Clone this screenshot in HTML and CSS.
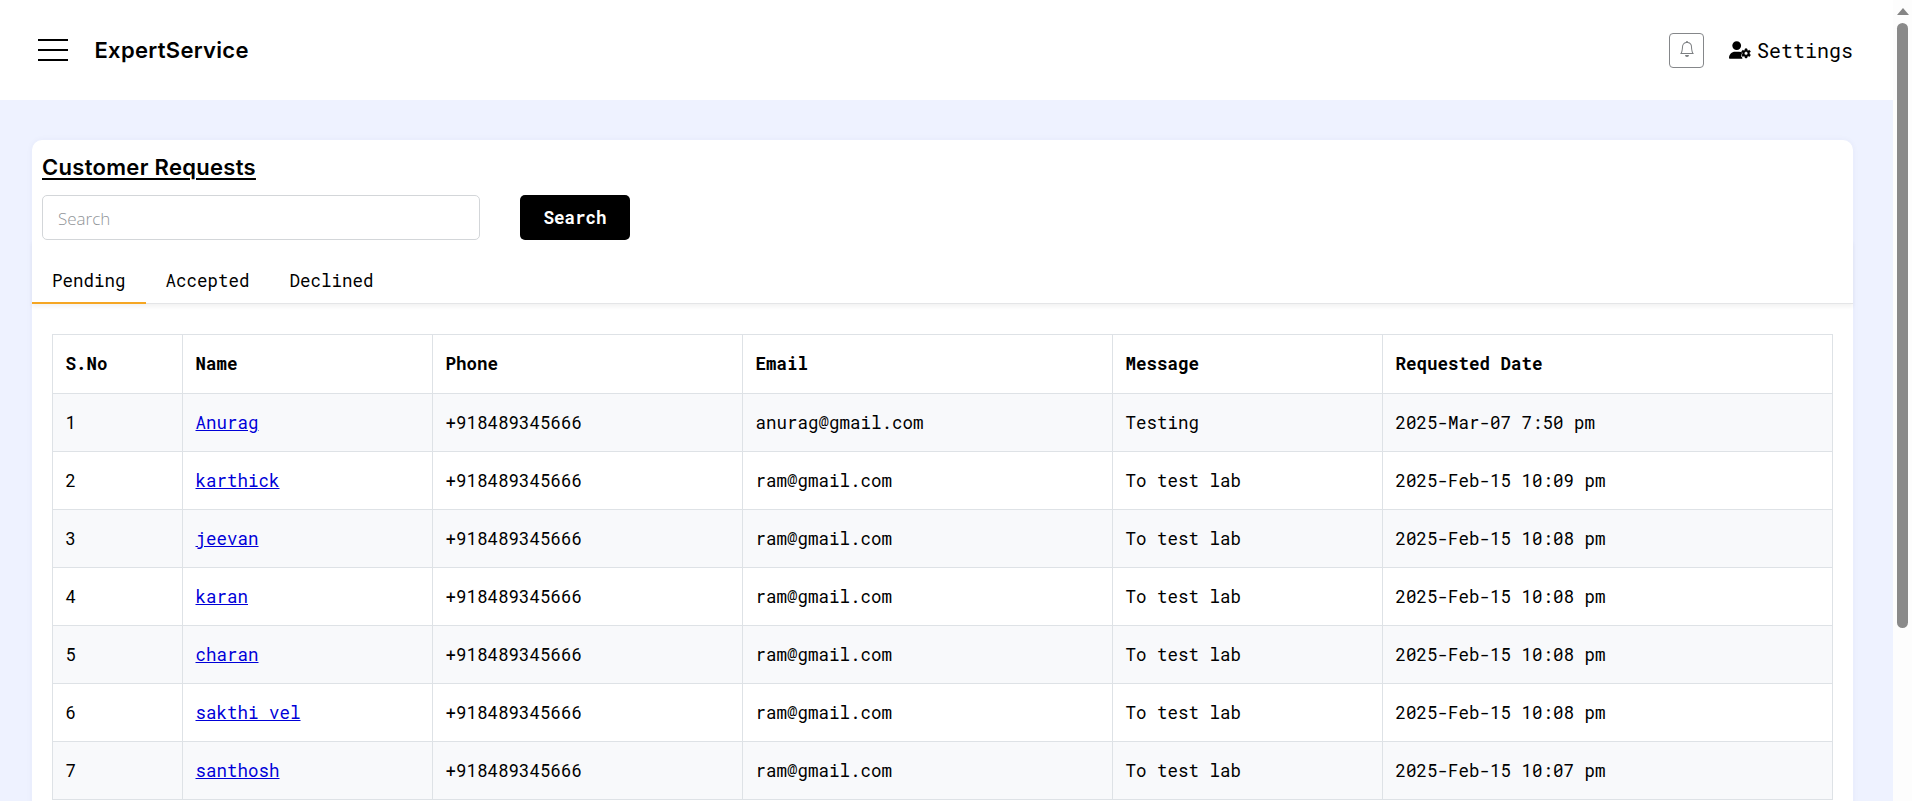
FILE: index.html
```html
<!DOCTYPE html>
<html lang="en">
<head>
<meta charset="utf-8">
<title>ExpertService</title>
<link rel="stylesheet" href="styles.css">
</head>
<body>
<div class="page">
  <header class="topbar">
    <button class="menu" aria-label="Menu"><span></span><span></span><span></span></button>
    <div class="brand"><span>ExpertService</span></div>
    <button class="bell" aria-label="Notifications">
      <svg width="16" height="16" viewBox="0 0 16 16" fill="#7c7f82"><path d="M8 16a2 2 0 0 0 2-2H6a2 2 0 0 0 2 2M8 1.918l-.797.161A4 4 0 0 0 4 6c0 .628-.134 2.197-.459 3.742-.16.767-.376 1.566-.663 2.258h10.244c-.287-.692-.502-1.490-.663-2.258C12.134 8.197 12 6.628 12 6a4 4 0 0 0-3.203-3.920zM14.220 12c.223.447.481.801.78 1H1c.299-.199.557-.553.78-1C2.680 10.200 3 6.880 3 6c0-2.420 1.720-4.440 4.005-4.901a1 1 0 1 1 1.990 0A5 5 0 0 1 13 6c0 .88.32 4.200 1.220 6"/></svg>
    </button>
    <a class="settings">
      <svg width="22" height="18" viewBox="0 0 640 512"><path d="M224 256A128 128 0 1 0 224 0a128 128 0 1 0 0 256zm-45.700 48C79.800 304 0 383.800 0 482.300C0 498.700 13.300 512 29.700 512H392.600c-5.400-9.400-8.600-20.300-8.600-32v-8c-31-18-43-53-25-85l15-26c7-12 17-20 29-25c-32-20-69-32-111-32z"/><path fill-rule="evenodd" d="M470 196h52l9 41 26 15 40-13 27 46-32 29v30l32 29-27 46-40-13-26 15-9 41h-52l-9-41-26-15-40 13-27-46 32-29v-30l-32-29 27-46 40 13 26-15zM496 276a53 53 0 1 0 0 106a53 53 0 1 0 0-106z" transform="translate(0 24)" stroke="#000" stroke-width="16" stroke-linejoin="round"/></svg>
      <span>Settings</span>
    </a>
  </header>
  <main class="content">
    <section class="card">
      <h1 class="title"><span>Customer Requests</span></h1>
      <form class="search">
        <input type="text" placeholder="Search">
        <button type="button">Search</button>
      </form>
      <nav class="tabs">
        <a class="tab active">Pending</a><a class="tab">Accepted</a><a class="tab">Declined</a>
      </nav>
      <table class="requests">
        <colgroup><col class="c-no"><col class="c-name"><col class="c-phone"><col class="c-email"><col class="c-msg"><col></colgroup>
        <thead><tr><th>S.No</th><th>Name</th><th>Phone</th><th>Email</th><th>Message</th><th>Requested Date</th></tr></thead>
        <tbody>
          <tr><td>1</td><td><a href="#">Anurag</a></td><td>+918489345666</td><td>anurag@gmail.com</td><td>Testing</td><td>2025-Mar-07 7:50 pm</td></tr>
          <tr><td>2</td><td><a href="#">karthick</a></td><td>+918489345666</td><td>ram@gmail.com</td><td>To test lab</td><td>2025-Feb-15 10:09 pm</td></tr>
          <tr><td>3</td><td><a href="#">jeevan</a></td><td>+918489345666</td><td>ram@gmail.com</td><td>To test lab</td><td>2025-Feb-15 10:08 pm</td></tr>
          <tr><td>4</td><td><a href="#">karan</a></td><td>+918489345666</td><td>ram@gmail.com</td><td>To test lab</td><td>2025-Feb-15 10:08 pm</td></tr>
          <tr><td>5</td><td><a href="#">charan</a></td><td>+918489345666</td><td>ram@gmail.com</td><td>To test lab</td><td>2025-Feb-15 10:08 pm</td></tr>
          <tr><td>6</td><td><a href="#">sakthi vel</a></td><td>+918489345666</td><td>ram@gmail.com</td><td>To test lab</td><td>2025-Feb-15 10:08 pm</td></tr>
          <tr><td>7</td><td><a href="#">santhosh</a></td><td>+918489345666</td><td>ram@gmail.com</td><td>To test lab</td><td>2025-Feb-15 10:07 pm</td></tr>
        </tbody>
      </table>
    </section>
  </main>
</div>
<div class="scrollbar"><i class="arrow"></i><i class="thumb"></i></div>
</body>
</html>
```
FILE: styles.css
```css
* { box-sizing: border-box; }
body {
  margin: 0;
  height: 801px;
  display: flex;
  overflow: hidden;
  background: #fff;
  color: #000;
  font-family: "Roboto Mono", "DejaVu Sans Mono", monospace;
  font-size: 17.5px;
}
button { font: inherit; padding: 0; }
.page { width: 1893px; height: 801px; overflow: hidden; display: flex; flex-direction: column; }
.topbar { height: 100px; flex: none; display: flex; align-items: center; padding: 0 40px 0 38px; background: #fff; }
.menu { width: 30px; border: 0; background: none; display: flex; flex-direction: column; gap: 8px; }
.menu span { height: 2px; background: #000; }
.brand { flex: 1; margin-left: 26.5px; font: 600 22px/30px Inter, sans-serif; letter-spacing: .3px; }
.bell { width: 35px; height: 35px; border: 1px solid #85878a; border-radius: 4px; background: #fff; display: flex; align-items: center; justify-content: center; padding-bottom: 2px; }
.bell svg { margin-left: 1px; }
.settings { display: flex; align-items: center; margin-left: 25px; gap: 6px; font-size: 20px; line-height: 26px; }
.content { flex: 1; min-height: 0; background: #eef2ff; padding: 40px 40px 0 32px; }
.card { height: 900px; background: #fff; border-radius: 10px; box-shadow: 0 0 6px rgba(60, 60, 140, .05); }
.title { margin: 0; padding: 11px 10px 0; font: 600 22px/32px Inter, sans-serif; letter-spacing: .3px; text-decoration: underline; text-decoration-thickness: 2px; text-underline-offset: 3px; }
.search { display: flex; gap: 40px; padding: 12px 10px 0; }
.search input { width: 438px; height: 45px; border: 1px solid #d3d6d9; border-radius: 5px; padding: 2px 15px 0; font: 300 17px "Open Sans", sans-serif; outline: 0; }
.search input::placeholder { color: #909498; opacity: 1; }
.search button { width: 110px; height: 45px; border: 0; border-radius: 5px; background: #000; color: #fff; font-weight: 700; }
.tabs { display: flex; height: 64px; gap: 20px; border-bottom: 1px solid #e4e5e7; box-shadow: 0 3px 4px rgba(0, 0, 0, .05); }
.tab { height: 64px; padding: 29px 20px 0; line-height: 24px; }
.tab + .tab { padding: 29px 0 0; }
.tab + .tab + .tab { margin-left: 20px; }
.active { border-bottom: 2px solid #f5a623; }
.requests { width: 1781px; margin: 30px 0 0 20px; border-collapse: collapse; table-layout: fixed; }
.c-no { width: 130px; }
.c-name { width: 250px; }
.c-phone { width: 310px; }
.c-email { width: 370px; }
.c-msg { width: 270px; }
.requests th, .requests td { height: 58px; border: 1px solid #dee2e6; padding: 0 12.5px; text-align: left; }
.requests th { height: 59px; padding-bottom: 2px; }
.requests tbody tr:nth-child(odd) { background: #f8f9fb; }
.requests a { color: #0000d8; text-decoration: underline; }
.scrollbar { width: 19px; flex: none; background: #fdfdfd; display: flex; flex-direction: column; align-items: center; padding-top: 8px; }
.arrow { border: 6.5px solid transparent; border-top: 0; border-bottom: 7px solid #858585; }
.thumb { width: 11px; height: 605px; margin-top: 8px; border-radius: 6px; background: #8a8a8a; }
```
